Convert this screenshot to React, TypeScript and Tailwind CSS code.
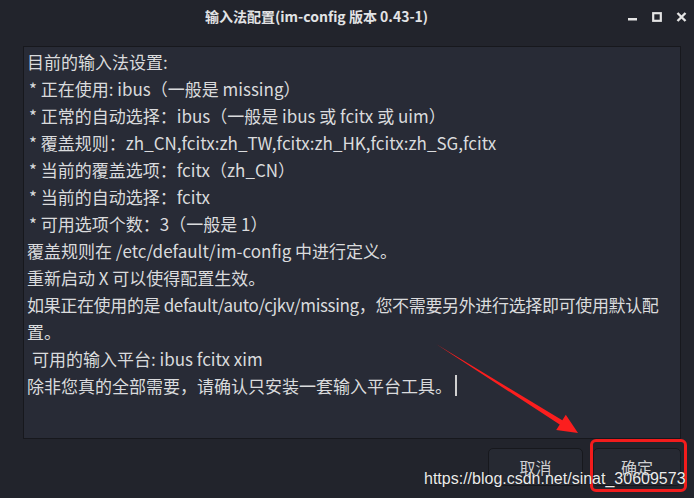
import React from "react"

const lines: { text: string; indent?: string }[] = [
  { text: "目前的输入法设置:" },
  { text: "* 正在使用: ibus（一般是 missing）", indent: "pl-[2px]" },
  { text: "* 正常的自动选择：ibus（一般是 ibus 或 fcitx 或 uim）", indent: "pl-[2px]" },
  { text: "* 覆盖规则：zh_CN,fcitx:zh_TW,fcitx:zh_HK,fcitx:zh_SG,fcitx", indent: "pl-[2px]" },
  { text: "* 当前的覆盖选项：fcitx（zh_CN）", indent: "pl-[2px]" },
  { text: "* 当前的自动选择：fcitx", indent: "pl-[2px]" },
  { text: "* 可用选项个数：3（一般是 1）", indent: "pl-[2px]" },
  { text: "覆盖规则在 /etc/default/im-config 中进行定义。" },
  { text: "重新启动 X 可以使得配置生效。" },
  { text: "如果正在使用的是 default/auto/cjkv/missing，您不需要另外进行选择即可使用默认配", indent: "tracking-[-0.35px]" },
  { text: "置。" },
  { text: "可用的输入平台: ibus fcitx xim", indent: "pl-[5px]" },
]

export default function App() {
  return (
    <div className="relative w-[694px] h-[498px] overflow-hidden bg-[#22242c] font-['Noto_Sans_CJK_SC','Noto_Sans',sans-serif] text-[#dadbdd]">
      {/* Title bar */}
      <div className="flex items-center h-[32px]">
        <div className="pl-[205px] text-[14px] font-bold text-[#e2e3e5]">
          输入法配置(im-config 版本 0.43-1)
        </div>
        <div className="ml-auto flex items-center gap-[14px] pr-[7px] pt-[1px]">
          <svg width="11" height="10" viewBox="0 0 11 10">
            <rect x="1" y="6" width="9" height="2.5" fill="#e4e4e4" />
          </svg>
          <svg width="10" height="10" viewBox="0 0 10 10">
            <rect x="1.2" y="1.2" width="7.6" height="7.6" fill="none" stroke="#e4e4e4" strokeWidth="2.2" />
          </svg>
          <svg width="11" height="10" viewBox="0 0 11 10">
            <path d="M1.5 1 L9.5 9 M9.5 1 L1.5 9" stroke="#e4e4e4" strokeWidth="2.4" />
          </svg>
        </div>
      </div>

      {/* Text area */}
      <div className="ml-[23px] mt-[14px] w-[658px] h-[393px] bg-[#282b36] border border-[#17181d] pl-[3px] pt-[1px] text-[17px] leading-[27px]">
        {lines.map((l, i) => (
          <div key={i} className={`whitespace-nowrap ${l.indent ?? ""}`}>
            {l.text}
          </div>
        ))}
        <div className="whitespace-nowrap flex items-center">
          除非您真的全部需要，请确认只安装一套输入平台工具。
          <span className="ml-[3px] inline-block w-[1.5px] h-[21px] bg-[#d0d0d0]" />
        </div>
      </div>

      {/* Buttons */}
      <div className="flex gap-[10px] pl-[488px] mt-[9px]">
        <div className="w-[95px] h-[38px] rounded-[5px] border border-[#17181d] bg-[#262932] flex items-center justify-center text-[16px] text-[#cfd0d2]">
          取消
        </div>
        <div className="w-[88px] h-[38px] rounded-[5px] border border-[#17181d] bg-[#262932] flex items-center justify-center text-[16px] text-[#cfd0d2]">
          确定
        </div>
      </div>

      {/* Red highlight box */}
      <div className="absolute left-[590px] top-[439px] w-[97px] h-[53px] border-[3px] border-[#f21c1c] rounded-[6px]" />

      {/* Red arrow */}
      <svg className="absolute left-0 top-0" width="694" height="498" viewBox="0 0 694 498">
        <polygon
          points="436,344 562.3,420.3 565.8,414.8 578,433 556.2,430 559.7,424.5"
          fill="#fb1e1e"
        />
      </svg>

      {/* Watermark */}
      <div className="absolute left-[424px] top-[467px] text-[16px] font-['Liberation_Sans',Arial,sans-serif] text-[#ececec] [text-shadow:0_0_1px_rgba(0,0,0,0.6)]">
        https://blog.csdn.net/sinat_30609573
      </div>
    </div>
  )
}
